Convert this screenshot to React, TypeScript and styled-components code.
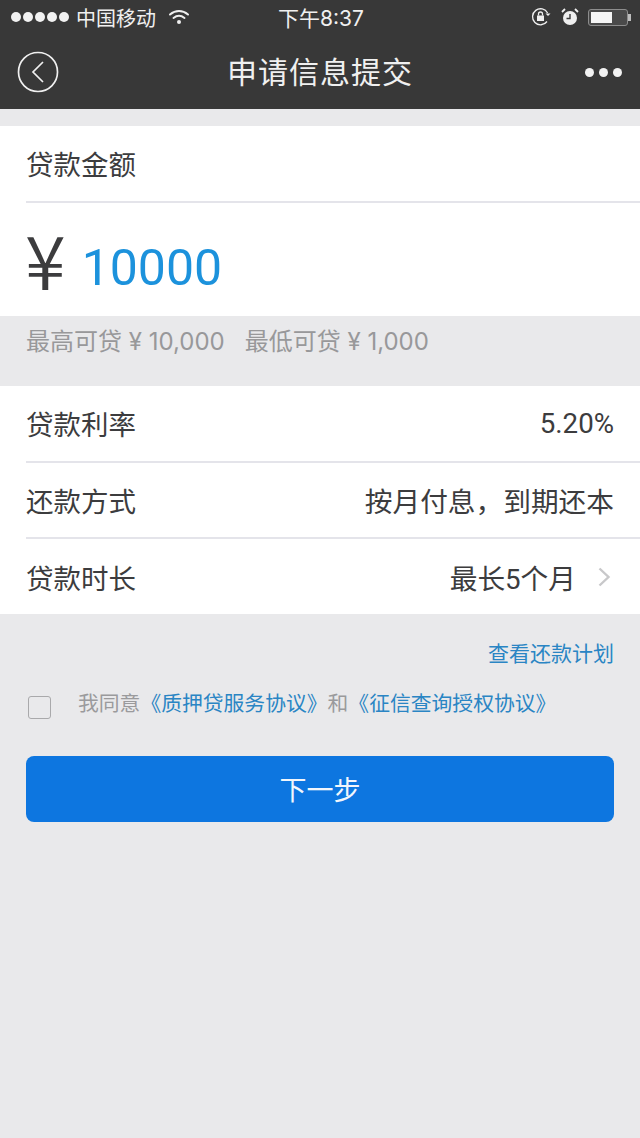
import React from 'react'
import styled, { createGlobalStyle } from 'styled-components'

const FONT = `Inter, "Noto Sans CJK SC", sans-serif`
const NUMBER_FONT = `Roboto, "Noto Sans CJK SC", sans-serif`

const GlobalStyle = createGlobalStyle`
  html, body {
    margin: 0;
    padding: 0;
    background: #e9e9eb;
  }
  * {
    box-sizing: border-box;
    text-spacing-trim: space-all;
  }
`

const App = () => (
  <StyledRoot>
    <GlobalStyle />
    <StyledHeader>
      <StyledStatusBar>
        <StyledStatusLeft>
          <StyledSignal>
            {[0, 1, 2, 3, 4].map(i => <i key={i} />)}
          </StyledSignal>
          <span>中国移动</span>
          <svg width="22" height="16" viewBox="0 0 22 16" fill="none" stroke="#efefef" strokeLinecap="round">
            <path d="M2 5.5C7.5 .8 14.5 .8 20 5.5" strokeWidth="2" />
            <path d="M5.5 9C9 6.2 13 6.2 16.5 9" strokeWidth="2" />
            <circle cx="11" cy="13" r="2" fill="#efefef" stroke="none" />
          </svg>
        </StyledStatusLeft>
        <StyledClock>下午8:37</StyledClock>
        <StyledStatusRight>
          <svg width="21" height="20" viewBox="0 0 21 20" fill="none" stroke="#efefef" strokeWidth="1.3">
            <path d="M16 14.5A8 8 0 1 1 16.6 6" />
            <path d="M14.5 6.5h5l-2.5 2.5z" fill="#efefef" stroke="none" />
            <rect x="6" y="8.5" width="7" height="5.5" fill="#efefef" stroke="none" />
            <path d="M7.5 8.5V7a2 2 0 0 1 4 0v1.5" />
          </svg>
          <svg width="20" height="20" viewBox="0 0 20 20" fill="none">
            <circle cx="10" cy="11" r="7" fill="#efefef" />
            <path d="M10 7v4.5H6.5" stroke="#3a3a3a" strokeWidth="1.4" />
            <path d="M2 5l3-3M18 5l-3-3" stroke="#efefef" strokeWidth="1.8" />
          </svg>
          <StyledBattery>
            <StyledBatteryFill />
          </StyledBattery>
        </StyledStatusRight>
      </StyledStatusBar>
      <StyledNavBar>
        <StyledBackButton>
          <svg width="42" height="42" viewBox="0 0 42 42" fill="none" stroke="#f0f0f0" strokeWidth="1.7">
            <circle cx="21" cy="21" r="19.5" />
            <path d="M26 11L16 21l10 10" />
          </svg>
        </StyledBackButton>
        <StyledTitle>申请信息提交</StyledTitle>
        <StyledMore>
          <i /><i /><i />
        </StyledMore>
      </StyledNavBar>
    </StyledHeader>

    <StyledAmountCard>
      <StyledAmountLabel>贷款金额</StyledAmountLabel>
      <StyledAmountRow>
        <StyledCurrency>¥</StyledCurrency>
        <StyledAmount>10000</StyledAmount>
      </StyledAmountRow>
    </StyledAmountCard>

    <StyledLimits>
      <span>最高可贷 ¥ 10,000</span>
      <span>最低可贷 ¥ 1,000</span>
    </StyledLimits>

    <StyledList>
      <StyledRow>
        <span>贷款利率</span>
        <StyledValue>5.20%</StyledValue>
      </StyledRow>
      <StyledRow>
        <span>还款方式</span>
        <StyledValue>按月付息，到期还本</StyledValue>
      </StyledRow>
      <StyledRow>
        <span>贷款时长</span>
        <StyledValue>
          最长5个月
          <svg width="14" height="20" viewBox="0 0 14 20" fill="none" stroke="#c8c8ca" strokeWidth="2.4">
            <path d="M2.5 1.5l9 8.5-9 8.5" />
          </svg>
        </StyledValue>
      </StyledRow>
    </StyledList>

    <StyledPlanLink>查看还款计划</StyledPlanLink>

    <StyledAgreement>
      <StyledCheckbox />
      <StyledAgreementText>
        我同意<a>《质押贷服务协议》</a>和<a>《征信查询授权协议》</a>
      </StyledAgreementText>
    </StyledAgreement>

    <StyledNextButton>下一步</StyledNextButton>
  </StyledRoot>
)

export default App

const StyledRoot = styled.div`
  display: flex;
  flex-direction: column;
  width: 640px;
  height: 1138px;
  overflow: hidden;
  background: #e9e9eb;
  font-family: ${FONT};
  color: #3c3c3e;
`

const StyledHeader = styled.header`
  height: 109px;
  padding: 0 18px 0 17px;
  background: #383838;
  color: #f0f0f0;
`

const StyledStatusBar = styled.div`
  display: grid;
  grid-template-columns: 1fr auto 1fr;
  align-items: center;
  height: 34px;
  font-size: 20px;
`

const StyledStatusLeft = styled.div`
  display: flex;
  align-items: center;
  gap: 7px;
  margin-left: -6px;

  svg {
    margin-left: 5px;
  }
`

const StyledSignal = styled.div`
  display: flex;
  gap: 2px;

  i {
    width: 10px;
    height: 10px;
    border-radius: 50%;
    background: #f2f2f2;
  }
`

const StyledClock = styled.div`
  margin-left: 3px;
  font-size: 21px;
`

const StyledStatusRight = styled.div`
  display: flex;
  align-items: center;
  justify-content: flex-end;
  gap: 8px;
  margin-right: -6px;
`

const StyledBattery = styled.div`
  position: relative;
  width: 40px;
  height: 17px;
  padding: 2px;
  border: 1px solid #8d8d8d;
  border-radius: 3px;
  background: #4a4a4a;

  &::after {
    content: '';
    position: absolute;
    top: 4px;
    right: -4px;
    width: 3px;
    height: 7px;
    background: #bdbdbd;
  }
`

const StyledBatteryFill = styled.div`
  width: 21px;
  height: 100%;
  background: #f5f5f5;
`

const StyledNavBar = styled.div`
  display: grid;
  grid-template-columns: 1fr auto 1fr;
  align-items: center;
  height: 75px;
`

const StyledBackButton = styled.div`
  display: flex;
  align-items: center;
`

const StyledTitle = styled.h1`
  margin: 0 0 3px 1px;
  font-size: 30px;
  font-weight: 400;
  letter-spacing: 1px;
`

const StyledMore = styled.div`
  display: flex;
  justify-content: flex-end;
  gap: 5px;
  margin-top: 2px;

  i {
    width: 9px;
    height: 9px;
    border-radius: 50%;
    background: #f2f2f2;
  }
`

const StyledAmountCard = styled.section`
  margin-top: 17px;
  background: #fff;
`

const StyledAmountLabel = styled.div`
  display: flex;
  align-items: center;
  height: 77px;
  margin-left: 26px;
  padding-bottom: 2px;
  border-bottom: 2px solid #e4e4ea;
  font-family: ${NUMBER_FONT};
  font-size: 27.5px;
`

const StyledAmountRow = styled.div`
  display: flex;
  align-items: center;
  gap: 16px;
  height: 113px;
  padding-left: 25px;
`

const StyledCurrency = styled.span`
  font-size: 74px;
  line-height: 1;
  margin-top: -4px;
  font-family: "Noto Sans CJK SC", sans-serif;
  font-weight: 350;
`

const StyledAmount = styled.span`
  margin-top: 16px;
  font-family: ${NUMBER_FONT};
  font-size: 50px;
  color: #1c92dc;
`

const StyledLimits = styled.div`
  display: flex;
  gap: 20px;
  height: 70px;
  padding: 10px 0 0 26px;
  font-size: 24px;
  line-height: 32px;
  color: #98989a;
`

const StyledList = styled.section`
  background: #fff;
`

const StyledRow = styled.div`
  display: flex;
  align-items: center;
  justify-content: space-between;
  height: 76.5px;
  margin-left: 26px;
  padding-right: 26px;
  border-bottom: 2px solid #e4e4ea;
  font-family: ${NUMBER_FONT};
  font-size: 27.5px;

  &:last-child {
    height: 75px;
    border-bottom: 0;
  }
`

const StyledValue = styled.span`
  display: flex;
  align-items: center;
  gap: 21px;
  font-size: 27.7px;

  svg {
    margin-right: 3px;
  }
`

const StyledPlanLink = styled.a`
  align-self: flex-end;
  margin: 26px 26px 0 0;
  font-size: 21px;
  line-height: 28px;
  color: #2a85c4;
`

const StyledAgreement = styled.div`
  display: flex;
  align-items: center;
  gap: 27px;
  margin: 22px 0 0 28px;
`

const StyledCheckbox = styled.span`
  width: 23px;
  height: 23px;
  margin-top: 4px;
  border: 1.5px solid #a9a9ab;
  border-radius: 3px;
`

const StyledAgreementText = styled.p`
  margin: 0 0 2px;
  font-size: 20.8px;
  line-height: 28px;
  color: #9a9a9c;

  a {
    color: #2a85c4;
  }
`

const StyledNextButton = styled.button`
  height: 66px;
  margin: 36px 26px 0;
  padding: 0 0 2px;
  border: 0;
  border-radius: 8px;
  background: #0d76e0;
  color: #f2f6fc;
  font-family: ${FONT};
  font-size: 27px;
`
